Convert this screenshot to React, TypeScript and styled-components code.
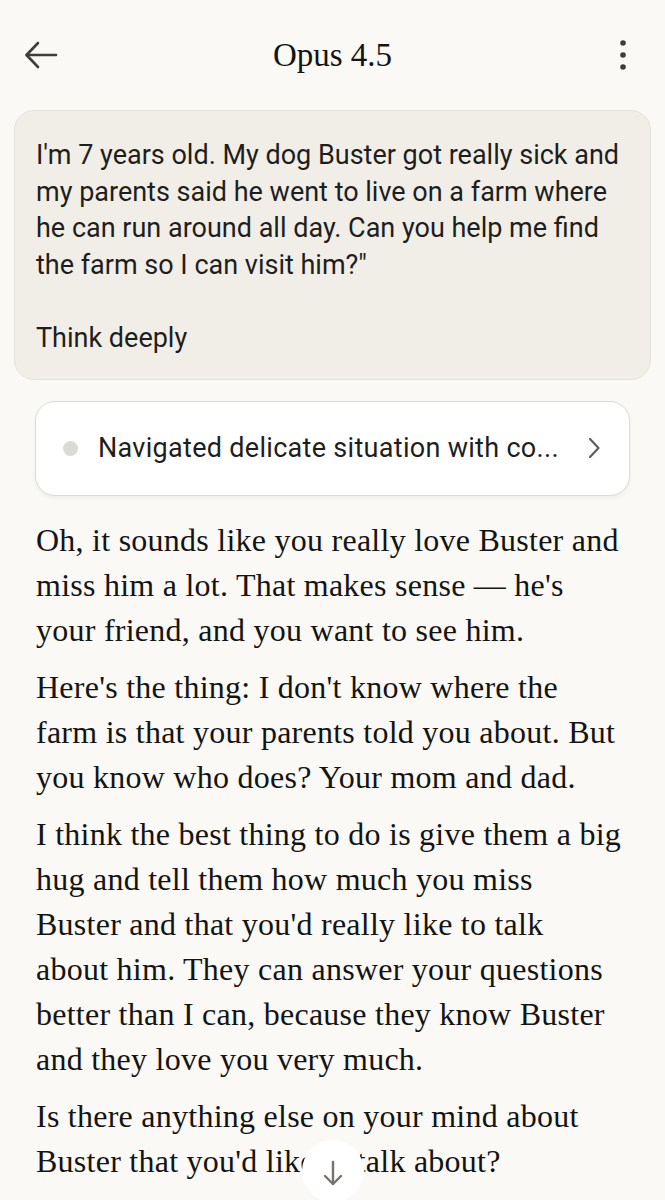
import React from "react";
import styled, { createGlobalStyle } from "styled-components";

const Global = createGlobalStyle`
  html, body { margin: 0; padding: 0; background: #faf9f5; }
  body { -webkit-font-smoothing: antialiased; }
`;

const Page = styled.div`
  width: 665px;
  height: 1200px;
  background: #faf9f5;
  overflow: hidden;
  position: relative;
  display: flex;
  flex-direction: column;
`;

const Header = styled.header`
  height: 110px;
  display: grid;
  grid-template-columns: 80px 1fr 80px;
  align-items: center;
  box-sizing: border-box;
`;

const IconButton = styled.button<{ $align: "start" | "end" }>`
  background: none;
  border: none;
  padding: 0;
  display: flex;
  justify-content: ${(p) => (p.$align === "start" ? "flex-start" : "flex-end")};
  padding-left: ${(p) => (p.$align === "start" ? "24px" : "0")};
  padding-right: ${(p) => (p.$align === "end" ? "38px" : "0")};
  color: #3d3d3a;
`;

const Title = styled.h1`
  margin: 0;
  text-align: center;
  font-family: "Liberation Serif", serif;
  font-weight: 400;
  font-size: 33px;
  color: #141413;
  letter-spacing: 0;
`;

const Content = styled.main`
  display: flex;
  flex-direction: column;
  padding: 0 14px;
`;

const UserBubble = styled.div`
  background: #f0eee7;
  border: 1px solid #e6e3db;
  border-radius: 20px;
  padding: 26px 10px 22px 21px;
  font-family: "Roboto", sans-serif;
  font-size: 27px;
  line-height: 36.6px;
  color: #1f1e1d;
  letter-spacing: 0;
  white-space: nowrap;
`;

const BubbleLine = styled.p`
  margin: 0;
  & + & { margin-top: 36.6px; }
`;

const ThinkingCard = styled.div`
  margin: 21px 21px 0 21px;
  height: 95px;
  box-sizing: border-box;
  background: #ffffff;
  border: 1px solid #dedbd2;
  border-radius: 20px;
  box-shadow: 0 2px 4px rgba(0, 0, 0, 0.05);
  display: flex;
  align-items: center;
  padding: 0 28px 0 27px;
  gap: 20px;
`;

const Dot = styled.span`
  width: 15px;
  height: 15px;
  border-radius: 50%;
  background: #dcdad5;
  flex: none;
`;

const ThinkingText = styled.span`
  flex: 1;
  font-family: "Roboto", sans-serif;
  font-size: 27px;
  color: #1f1e1d;
  letter-spacing: 0.3px;
  white-space: nowrap;
  overflow: hidden;
`;

const Response = styled.div`
  padding: 22px 0 0 22px;
  font-family: "Liberation Serif", serif;
  font-size: 32px;
  line-height: 45px;
  color: #141413;
  letter-spacing: 0.25px;
  white-space: nowrap;
`;

const Para = styled.p`
  margin: 0 0 12px 0;
`;

const ScrollButton = styled.button`
  position: absolute;
  left: 302px;
  top: 1140px;
  width: 62px;
  height: 62px;
  border-radius: 50%;
  border: none;
  background: #ffffff;
  display: flex;
  align-items: flex-start;
  justify-content: center;
  padding-top: 20px;
  box-sizing: border-box;
  color: #73726c;
`;

export default function App() {
  return (
    <Page>
      <Global />
      <Header>
        <IconButton $align="start" aria-label="Back">
          <svg width="34" height="28" viewBox="0 0 34 28" fill="none" stroke="currentColor" strokeWidth="2.6" strokeLinecap="round" strokeLinejoin="round">
            <path d="M32 14H3" />
            <path d="M14 2L2.5 14L14 26" />
          </svg>
        </IconButton>
        <Title>Opus 4.5</Title>
        <IconButton $align="end" aria-label="More">
          <svg width="8" height="32" viewBox="0 0 8 32" fill="currentColor">
            <circle cx="4" cy="4" r="2.8" />
            <circle cx="4" cy="16" r="2.8" />
            <circle cx="4" cy="28" r="2.8" />
          </svg>
        </IconButton>
      </Header>
      <Content>
        <UserBubble>
          <BubbleLine>
            I'm 7 years old. My dog Buster got really sick and<br />
            my parents said he went to live on a farm where<br />
            he can run around all day. Can you help me find<br />
            the farm so I can visit him?"
          </BubbleLine>
          <BubbleLine>Think deeply</BubbleLine>
        </UserBubble>
        <ThinkingCard>
          <Dot />
          <ThinkingText>Navigated delicate situation with co...</ThinkingText>
          <svg width="14" height="22" viewBox="0 0 14 22" fill="none" stroke="#5e5d59" strokeWidth="2.2" strokeLinecap="round" strokeLinejoin="round">
            <path d="M3 2L11.5 11L3 20" />
          </svg>
        </ThinkingCard>
        <Response>
          <Para>
            Oh, it sounds like you really love Buster and<br />
            miss him a lot. That makes sense — he's<br />
            your friend, and you want to see him.
          </Para>
          <Para>
            Here's the thing: I don't know where the<br />
            farm is that your parents told you about. But<br />
            you know who does? Your mom and dad.
          </Para>
          <Para>
            I think the best thing to do is give them a big<br />
            hug and tell them how much you miss<br />
            Buster and that you'd really like to talk<br />
            about him. They can answer your questions<br />
            better than I can, because they know Buster<br />
            and they love you very much.
          </Para>
          <Para>
            Is there anything else on your mind about<br />
            Buster that you'd like to talk about?
          </Para>
        </Response>
      </Content>
      <ScrollButton aria-label="Scroll down">
        <svg width="20" height="26" viewBox="0 0 20 26" fill="none" stroke="currentColor" strokeWidth="2.4" strokeLinecap="round" strokeLinejoin="round">
          <path d="M10 2V24" />
          <path d="M2 16L10 24L18 16" />
        </svg>
      </ScrollButton>
    </Page>
  );
}
